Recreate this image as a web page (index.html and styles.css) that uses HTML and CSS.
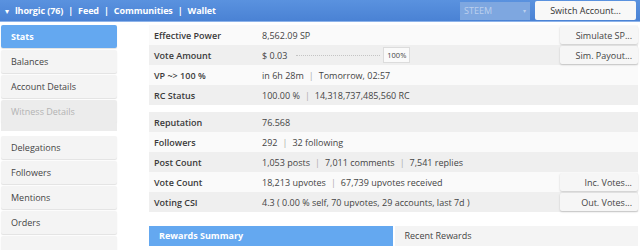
FILE: index.html
```html
<!DOCTYPE html>
<html lang="en">
<head>
    <meta charset="UTF-8">
    <title>SteemWorld - Stats</title>
    <link rel="stylesheet" href="styles.css">
</head>
<body>
    <div class="topbar">
        <div class="nav">
            <span class="caret">&#9662;</span>
            <span>lhorgic (76)</span><span class="sep">|</span>
            <span>Feed</span><span class="sep">|</span>
            <span>Communities</span><span class="sep">|</span>
            <span>Wallet</span>
        </div>
        <div class="chain-select">STEEM <span class="chain-caret">&#9662;</span></div>
        <button class="switch-btn">Switch Account...</button>
    </div>

    <div class="page">
        <div class="sidebar">
            <div class="side-item active">Stats</div>
            <div class="side-item">Balances</div>
            <div class="side-item">Account Details</div>
            <div class="side-item disabled">Witness Details</div>
            <div class="side-sep"></div>
            <div class="side-item">Delegations</div>
            <div class="side-item">Followers</div>
            <div class="side-item">Mentions</div>
            <div class="side-item">Orders</div>
            <div class="side-item"></div>
        </div>

        <div class="main">
            <div class="table">
                <div class="row">
                    <div class="label">Effective Power</div>
                    <div class="value">8,562.09 SP</div>
                    <button class="row-btn">Simulate SP...</button>
                </div>
                <div class="row alt">
                    <div class="label">Vote Amount</div>
                    <div class="value">
                        $ 0.03
                        <span class="slider"></span>
                        <span class="pct">100%</span>
                    </div>
                    <button class="row-btn">Sim. Payout...</button>
                </div>
                <div class="row">
                    <div class="label">VP ~&gt; 100 %</div>
                    <div class="value">in 6h 28m <span class="sep">|</span> Tomorrow, 02:57</div>
                </div>
                <div class="row alt">
                    <div class="label">RC Status</div>
                    <div class="value">100.00 % <span class="sep">|</span> 14,318,737,485,560 RC</div>
                </div>
            </div>

            <div class="table">
                <div class="row alt">
                    <div class="label">Reputation</div>
                    <div class="value">76.568</div>
                </div>
                <div class="row">
                    <div class="label">Followers</div>
                    <div class="value">292 <span class="sep">|</span> 32 following</div>
                </div>
                <div class="row alt">
                    <div class="label">Post Count</div>
                    <div class="value">1,053 posts <span class="sep">|</span> 7,011 comments <span class="sep">|</span> 7,541 replies</div>
                </div>
                <div class="row">
                    <div class="label">Vote Count</div>
                    <div class="value">18,213 upvotes <span class="sep">|</span> 67,739 upvotes received</div>
                    <button class="row-btn">Inc. Votes...</button>
                </div>
                <div class="row alt">
                    <div class="label">Voting CSI</div>
                    <div class="value">4.3 ( 0.00 % self, 70 upvotes, 29 accounts, last 7d )</div>
                    <button class="row-btn">Out. Votes...</button>
                </div>
            </div>

            <div class="tabs">
                <div class="tab active">Rewards Summary</div>
                <div class="tab">Recent Rewards</div>
            </div>
        </div>
    </div>
</body>
</html>
```

FILE: styles.css
```css
body {
    margin: 0;
    padding: 0;
    font-family: "Open Sans", "DejaVu Sans", sans-serif;
    font-size: 9px;
    color: #333;
    background: #fff;
    overflow: hidden;
}

button {
    font-family: inherit;
    font-size: 9px;
    color: #444;
    cursor: pointer;
}

.topbar {
    height: 21px;
    display: flex;
    align-items: center;
    background: linear-gradient(#5a92df, #4a82d4);
    border-bottom: 1px solid #8db3ea;
    padding: 0 4px 0 5px;
}

.nav {
    flex: 1;
    display: flex;
    align-items: center;
    color: #fff;
    font-weight: 700;
    font-size: 9px;
    letter-spacing: -0.1px;
}

.nav .caret {
    font-size: 8px;
    margin-right: 6px;
}

.nav .sep {
    margin: 0 5px;
    color: #fff;
}

.chain-select {
    width: 62px;
    height: 18px;
    line-height: 18px;
    padding: 0 4px;
    margin-right: 5px;
    background: #7ea7e0;
    color: #bcd0ee;
    font-size: 9px;
    display: flex;
    justify-content: space-between;
}

.chain-caret {
    font-size: 6px;
}

.switch-btn {
    width: 101px;
    height: 19px;
    background: #f8f8f8;
    border: none;
    border-radius: 2px;
    color: #333;
}

.page {
    display: flex;
    padding-top: 3px;
}

.sidebar {
    width: 116px;
    margin-left: 1px;
    display: flex;
    flex-direction: column;
    gap: 2px;
}

.side-item {
    height: 23px;
    line-height: 23px;
    padding-left: 10px;
    background: #f4f4f4;
    box-shadow: 0 1px 1px rgba(0, 0, 0, 0.12);
    border-radius: 2px;
    color: #444;
}

.side-item.active {
    background: #64a8f0;
    color: #fff;
    font-weight: 700;
}

.side-item.disabled {
    background: #ececec;
    color: #b3b3b3;
}

.side-sep {
    height: 8px;
    background: #ececec;
    margin: -2px 0 3px;
}

.main {
    flex: 1;
    margin-left: 32px;
    margin-right: 2px;
}

.table {
    margin-bottom: 7px;
}

.row {
    height: 20px;
    display: flex;
    align-items: center;
    background: #fafafa;
}

.row.alt {
    background: #efefef;
}

.label {
    width: 108px;
    padding-left: 5px;
    font-weight: 600;
    color: #3a3a3a;
}

.value {
    flex: 1;
    display: flex;
    align-items: center;
    gap: 3px;
    color: #444;
}

.sep {
    color: #aaa;
    margin: 0 2px;
}

.slider {
    width: 84px;
    border-top: 1px dotted #c4c4c4;
    margin-left: 6px;
}

.pct {
    font-size: 7.5px;
    padding: 2px 3px;
    border: 1px solid #dcdcdc;
    background: #fafafa;
}

.row-btn {
    width: 78px;
    height: 18px;
    background: #f6f6f6;
    border: none;
    box-shadow: 0 1px 2px rgba(0, 0, 0, 0.2);
    border-radius: 2px;
    text-align: right;
    padding-right: 6px;
}

.tabs {
    display: flex;
    gap: 2px;
    margin-top: 14px;
}

.tab {
    flex: 1;
    height: 20px;
    line-height: 20px;
    padding-left: 10px;
    background: #f4f4f4;
    color: #444;
}

.tab.active {
    background: #64a8f0;
    color: #fff;
    font-weight: 700;
}
```
